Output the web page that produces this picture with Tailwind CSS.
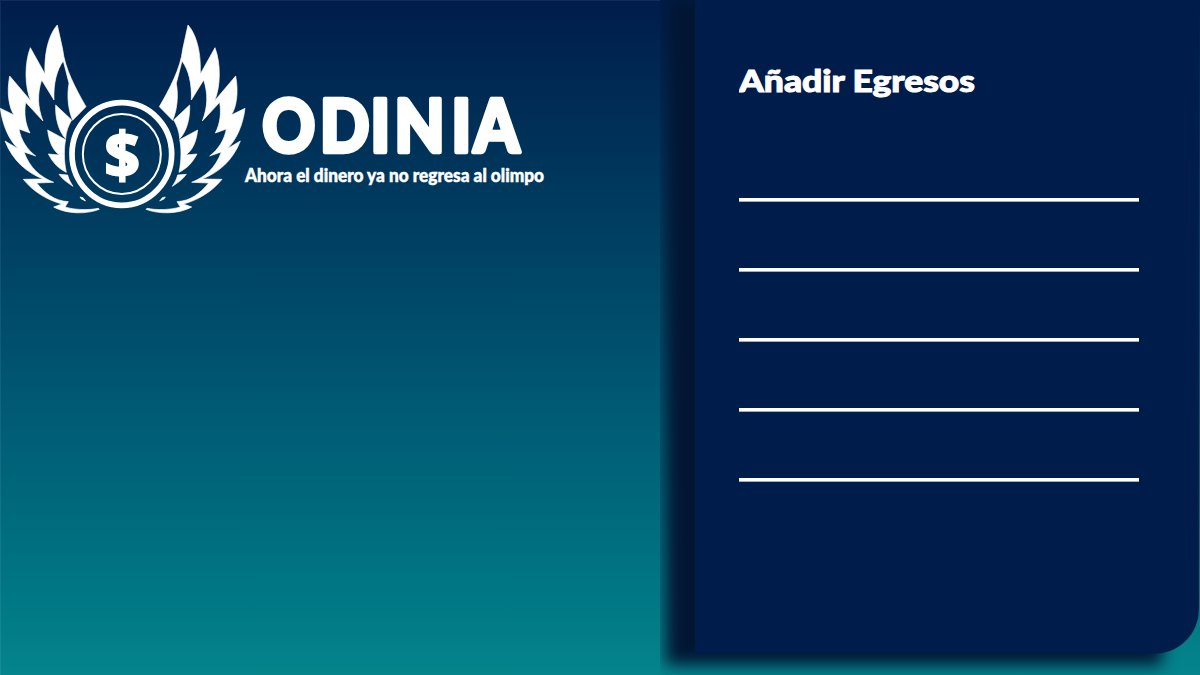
<!DOCTYPE html>
<html lang="es">
<head>
<meta charset="utf-8">
<title>Odinia</title>
<script src="https://cdn.jsdelivr.net/npm/@tailwindcss/browser@4"></script>
</head>
<body class="overflow-hidden">
<main class="flex h-[675px] w-[1200px] overflow-hidden bg-linear-to-b from-[#001c4b] to-[#05848c] font-['Lato',sans-serif] text-white">
  <section class="w-[660px] shrink-0 border-l border-t border-white/7">
    <svg class="-ml-px -mt-px block" width="660" height="230" viewBox="0 0 660 230" fill="#fff" role="img" aria-label="Odinia">
      <defs>
        <g id="wing">
          <path d="M172 75C152 97 132 145 135 222L91 143C73 190 74 260 92 302L29 228C19 280 28 325 42 345L1 325C7 375 27 420 54 446L15 423C38 483 82 519 130 537L70 538C98 573 140 600 186 612L161 621C200 643 260 643 298 628L295 625C265 631 225 630 195 621L205 605C165 603 135 580 110 549L161 547C120 530 90 505 72 456L107 468C80 447 63 420 57 387L90 399C75 370 72 340 77 307L129 363C112 320 112 280 125 240L162 300C160 250 170 210 190 183L207 250C200 290 205 330 218 361L258 320C228 268 194 205 188 148Z"/>
          <path d="M167 315C165 350 175 395 197 416C198 395 206 375 215 360Z"/>
          <path d="M143 390C147 425 158 450 178 465L145 462C160 490 175 505 199 517C191 480 192 440 197 419Z"/>
          <path d="M177 523L203 525C206 538 212 548 219 559C205 550 187 538 177 523Z"/>
          <path d="M240 591L249 593L257 603L244 597Z"/>
        </g>
      </defs>
      <g transform="scale(.33333)">
        <g stroke="#fff" stroke-width="2">
          <use href="#wing"/>
          <use href="#wing" transform="translate(736 0) scale(-1 1)"/>
        </g>
        <ellipse cx="365.5" cy="462" rx="149.500" ry="154" fill="none" stroke="#fff" stroke-width="17"/>
        <ellipse cx="365.5" cy="462" rx="117" ry="120" fill="none" stroke="#fff" stroke-width="6"/>
      </g>
      <text x="104.500" y="177.500" stroke="#fff" stroke-width="2.4" class="font-['Open_Sans'] text-[62px] font-bold">$</text>
      <text transform="scale(.9 1)" x="291.7 355.6 411.7 438.3 501.7 526.5" y="152" stroke="#fff" stroke-width="4.6" stroke-linejoin="round" class="text-[72px] font-black">ODINIA</text>
      <text x="245" y="182" textLength="299" lengthAdjust="spacingAndGlyphs" stroke="#fff" stroke-width=".5" class="text-[18.5px] font-black">Ahora el dinero ya no regresa al olimpo</text>
    </svg>
  </section>
  <section class="relative w-[540px] shrink-0 overflow-hidden">
    <div class="absolute left-[6px] top-[-3px] h-[668px] w-[496px] bg-[#021634] blur-[8px]"></div>
    <div class="relative ml-[35px] h-[654px] w-[504px] rounded-br-[45px] bg-[#001c4b] pl-[44px] pt-[60px]">
      <h1>
        <svg class="block" width="240" height="44" viewBox="0 0 240 44" fill="#fff">
          <text x="0" y="32" textLength="236" lengthAdjust="spacingAndGlyphs" stroke="#fff" stroke-width="1" class="text-[31px] font-black">Añadir Egresos</text>
        </svg>
      </h1>
      <div class="mt-[94px] flex w-[400px] flex-col gap-[66px]">
        <div class="h-1 border-b border-[#a5abc0] bg-white"></div>
        <div class="h-1 border-b border-[#a5abc0] bg-white"></div>
        <div class="h-1 border-b border-[#a5abc0] bg-white"></div>
        <div class="h-1 border-b border-[#a5abc0] bg-white"></div>
        <div class="h-1 border-b border-[#a5abc0] bg-white"></div>
      </div>
    </div>
  </section>
</main>
</body>
</html>
